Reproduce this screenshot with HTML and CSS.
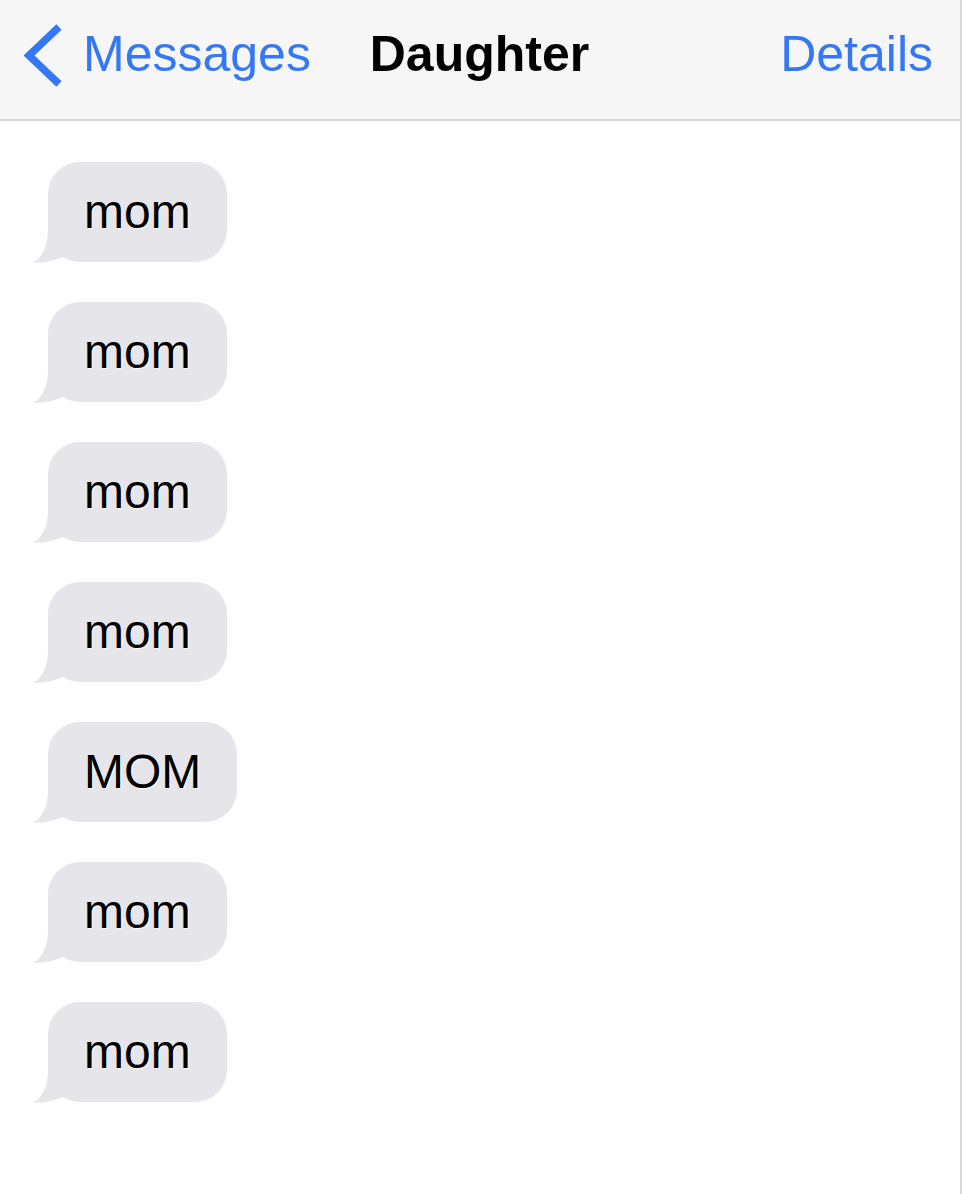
FILE: index.html
```html
<!DOCTYPE html>
<html lang="en">
<head>
<meta charset="utf-8">
<title>Daughter</title>
<link rel="stylesheet" href="styles.css">
</head>
<body>
<div class="screen">
  <header class="navbar">
    <div class="nav-left">
      <svg class="chevron" width="40" height="66" viewBox="0 0 40 66" aria-hidden="true">
        <path d="M35 5 L5 33.5 L35 62" fill="none" stroke="#3478f6" stroke-width="7.5" stroke-linejoin="miter"/>
      </svg>
      <span class="nav-link">Messages</span>
    </div>
    <div class="nav-title">Daughter</div>
    <div class="nav-right"><span class="nav-link">Details</span></div>
  </header>
  <main class="thread">
    <div class="bubble">mom<svg class="tail" width="40" height="40" viewBox="0 0 40 40" aria-hidden="true"><path d="M16 0 L16 6 Q16 31 1 40 Q22 40 36 31 L40 20 L40 0 Z" fill="#e5e5ea"/></svg></div>
    <div class="bubble">mom<svg class="tail" width="40" height="40" viewBox="0 0 40 40" aria-hidden="true"><path d="M16 0 L16 6 Q16 31 1 40 Q22 40 36 31 L40 20 L40 0 Z" fill="#e5e5ea"/></svg></div>
    <div class="bubble">mom<svg class="tail" width="40" height="40" viewBox="0 0 40 40" aria-hidden="true"><path d="M16 0 L16 6 Q16 31 1 40 Q22 40 36 31 L40 20 L40 0 Z" fill="#e5e5ea"/></svg></div>
    <div class="bubble">mom<svg class="tail" width="40" height="40" viewBox="0 0 40 40" aria-hidden="true"><path d="M16 0 L16 6 Q16 31 1 40 Q22 40 36 31 L40 20 L40 0 Z" fill="#e5e5ea"/></svg></div>
    <div class="bubble">MOM<svg class="tail" width="40" height="40" viewBox="0 0 40 40" aria-hidden="true"><path d="M16 0 L16 6 Q16 31 1 40 Q22 40 36 31 L40 20 L40 0 Z" fill="#e5e5ea"/></svg></div>
    <div class="bubble">mom<svg class="tail" width="40" height="40" viewBox="0 0 40 40" aria-hidden="true"><path d="M16 0 L16 6 Q16 31 1 40 Q22 40 36 31 L40 20 L40 0 Z" fill="#e5e5ea"/></svg></div>
    <div class="bubble">mom<svg class="tail" width="40" height="40" viewBox="0 0 40 40" aria-hidden="true"><path d="M16 0 L16 6 Q16 31 1 40 Q22 40 36 31 L40 20 L40 0 Z" fill="#e5e5ea"/></svg></div>
  </main>
</div>
</body>
</html>
```

FILE: styles.css
```css
html, body {
  margin: 0;
  padding: 0;
  background: #ffffff;
}

body {
  font-family: "Liberation Sans", Arial, Helvetica, sans-serif;
}

.screen {
  width: 960px;
  min-height: 1194px;
  border-right: 2px solid #d9d9d9;
  background: #ffffff;
}

.navbar {
  box-sizing: border-box;
  height: 121px;
  background: #f6f6f6;
  border-bottom: 2px solid #d5d5d5;
  display: grid;
  grid-template-columns: 1fr auto 1fr;
  align-items: center;
  padding: 0 27px 10px 24px;
}

.nav-left {
  display: flex;
  align-items: center;
  gap: 19px;
}

.chevron {
  display: block;
  margin-top: 1px;
}

.nav-link {
  font-size: 50px;
  color: #3478f6;
  line-height: 1.15;
}

.nav-title {
  font-size: 50px;
  font-weight: bold;
  color: #000000;
  line-height: 1.15;
  padding-left: 2px;
}

.nav-right {
  display: flex;
  justify-content: flex-end;
}

.thread {
  display: flex;
  flex-direction: column;
  align-items: flex-start;
  gap: 40px;
  padding: 41px 0 0 48px;
}

.bubble {
  position: relative;
  height: 100px;
  line-height: 100px;
  padding: 0 36px;
  border-radius: 32px;
  background: #e5e5ea;
  color: #000000;
  font-size: 48px;
  text-shadow: 1px 1px 1px rgba(255, 255, 255, 0.9);
}

.tail {
  position: absolute;
  left: -16px;
  bottom: -1px;
  display: block;
}
```
